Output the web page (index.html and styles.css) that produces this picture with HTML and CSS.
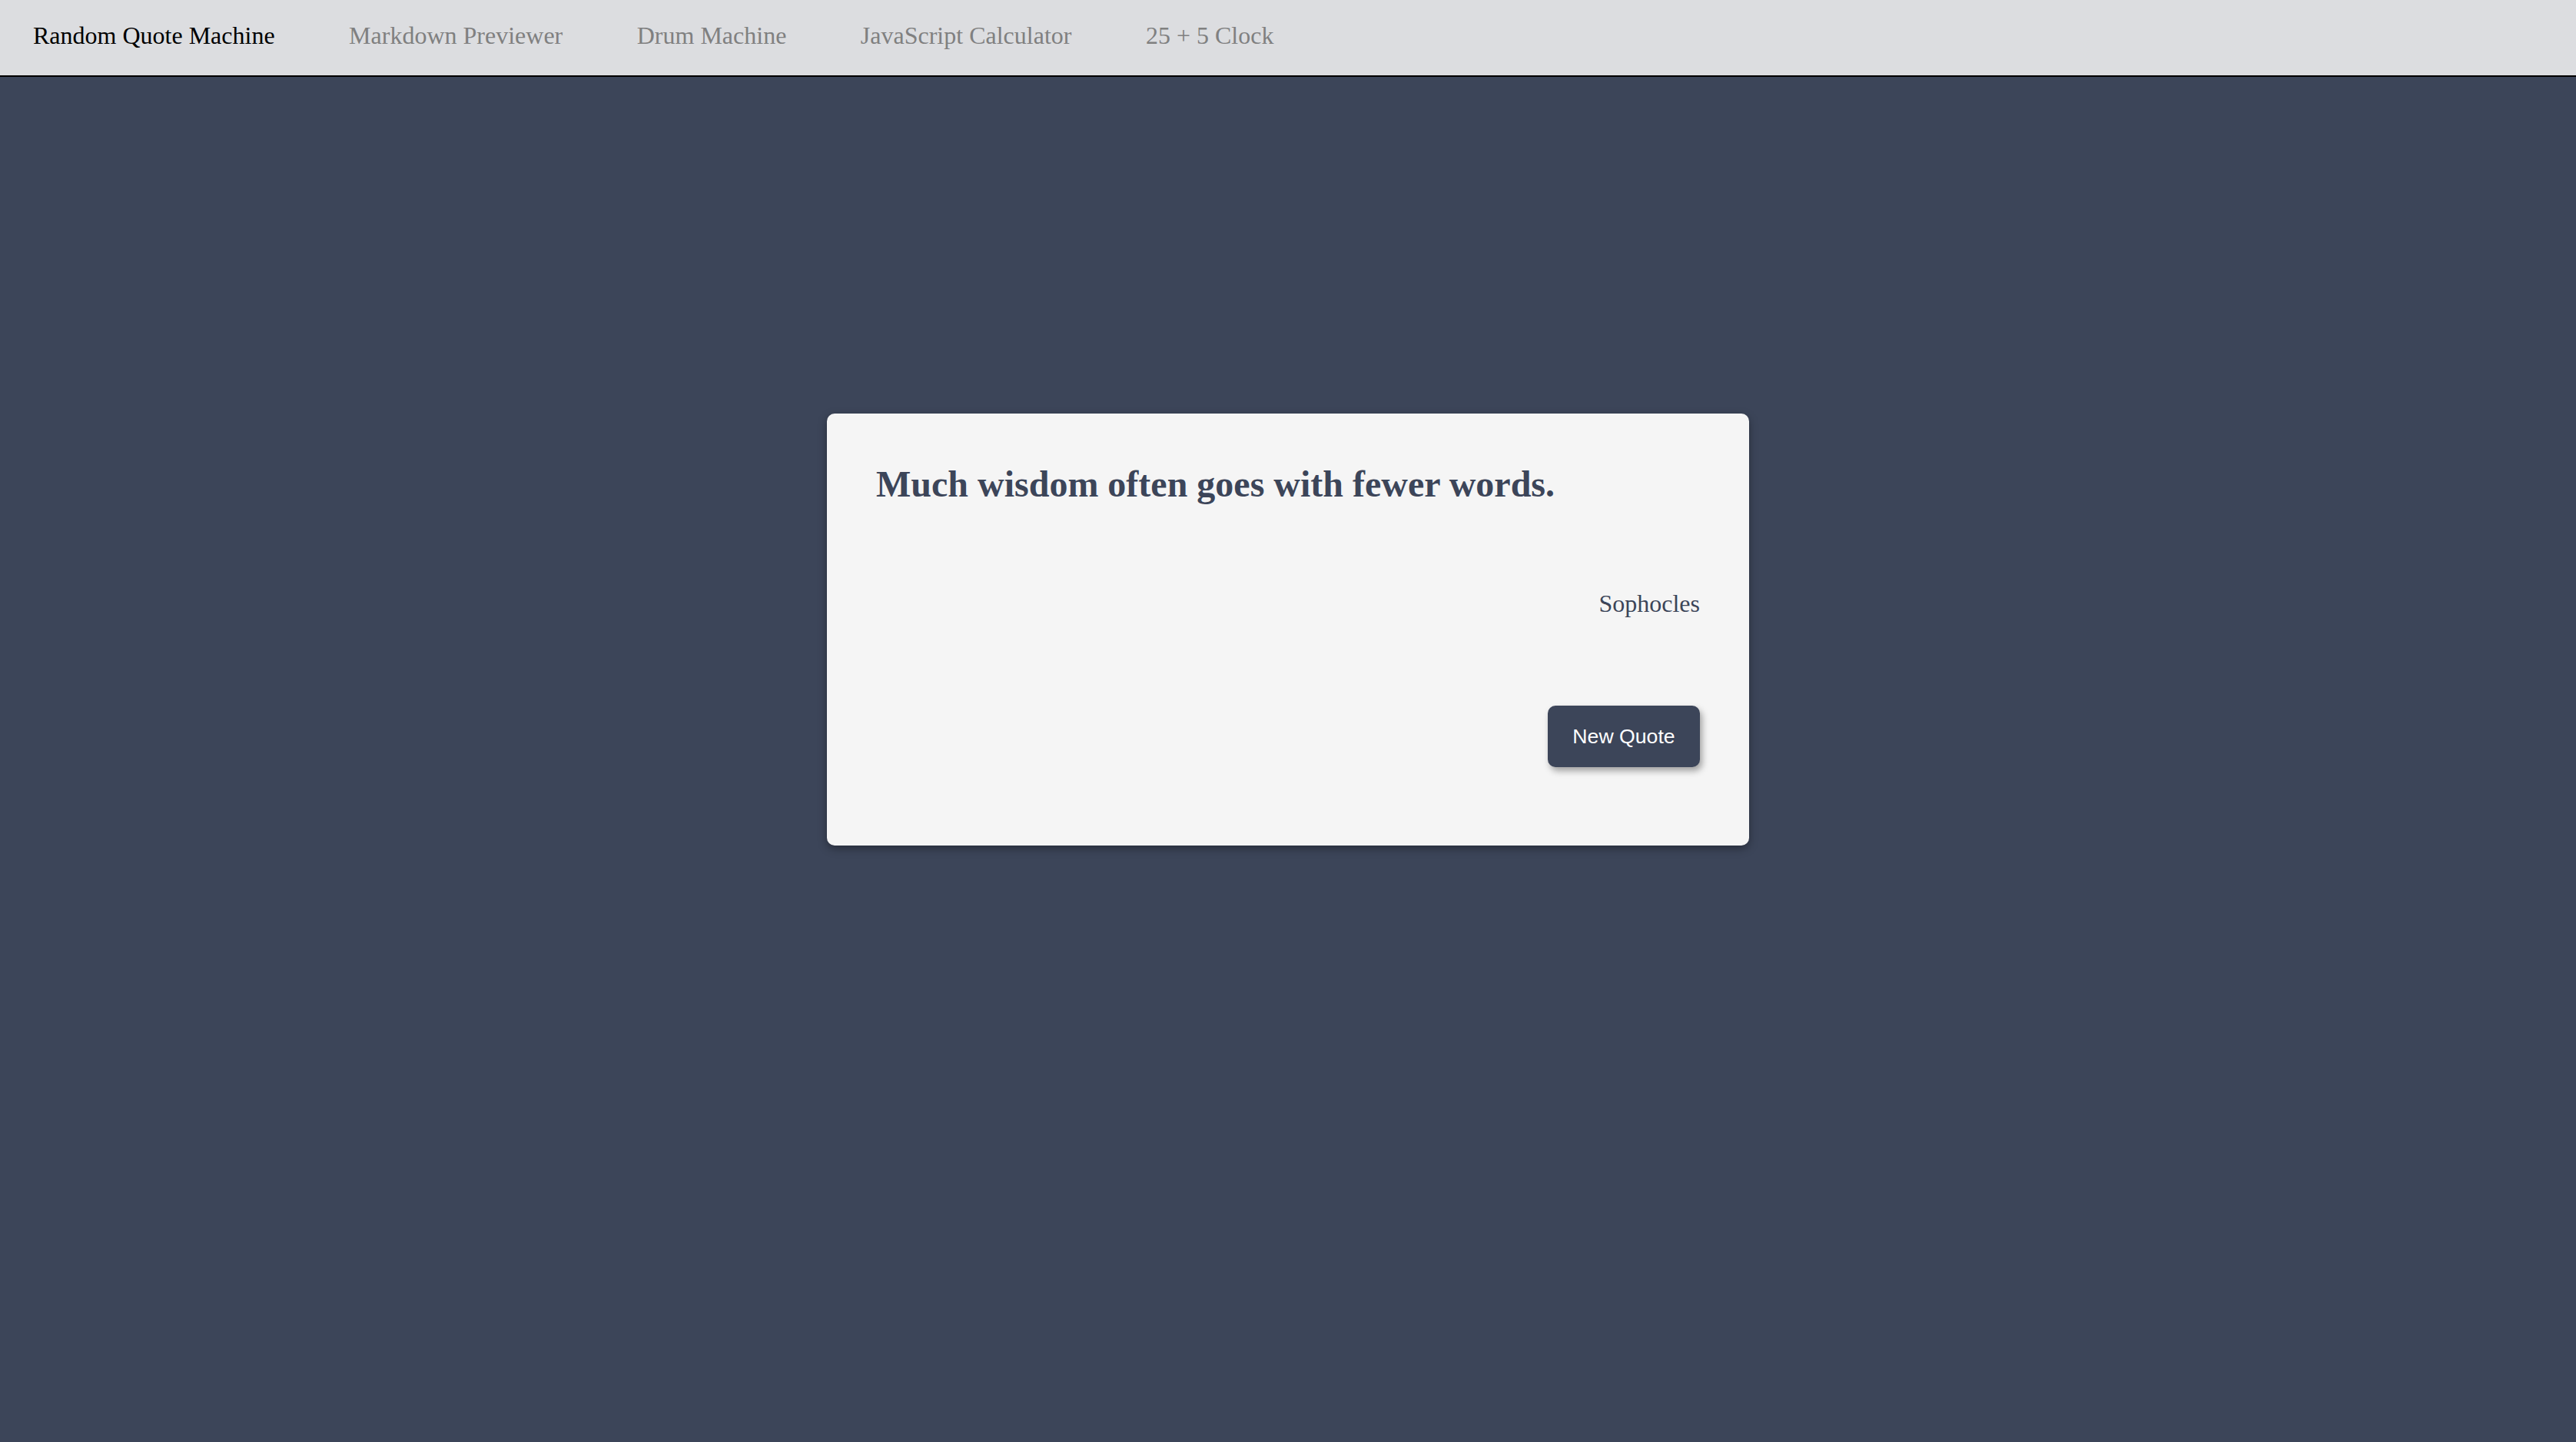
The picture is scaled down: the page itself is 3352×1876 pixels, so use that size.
FILE: index.html
```html
<!DOCTYPE html>
<html lang="en">
<head>
<meta charset="utf-8">
<title>Random Quote Machine</title>
<link rel="stylesheet" href="styles.css">
</head>
<body>
<nav class="nav">
  <a class="nav-link active" href="#">Random Quote Machine</a>
  <a class="nav-link" href="#">Markdown Previewer</a>
  <a class="nav-link" href="#">Drum Machine</a>
  <a class="nav-link" href="#">JavaScript Calculator</a>
  <a class="nav-link" href="#">25 + 5 Clock</a>
</nav>
<main class="main">
  <div class="quote-box" id="quote-box">
    <h1 class="quote-text" id="text">Much wisdom often goes with fewer words.</h1>
    <p class="quote-author" id="author">Sophocles</p>
    <div class="actions">
      <button class="new-quote" id="new-quote">New Quote</button>
    </div>
  </div>
</main>
</body>
</html>
```
FILE: styles.css
```css
html, body {
  margin: 0;
  padding: 0;
}
body {
  background: #3c4559;
  font-family: "Liberation Serif", "Times New Roman", serif;
  min-height: 1876px;
}
.nav {
  box-sizing: border-box;
  height: 100px;
  background: #dcdde0;
  border-bottom: 2px solid #000;
  display: flex;
  gap: 96.5px;
  padding: 28px 0 0 43px;
}
.nav-link {
  font-size: 32px;
  line-height: 37px;
  color: #808080;
  text-decoration: none;
}
.nav-link.active {
  color: #000;
}
.main {
  display: flex;
  justify-content: center;
  padding-top: 438px;
}
.quote-box {
  box-sizing: border-box;
  width: 1200px;
  height: 562px;
  background: #f5f5f5;
  border-radius: 10px;
  padding: 64px;
  box-shadow: 0 4px 12px rgba(0, 0, 0, 0.35);
  color: #3c4559;
}
.quote-text {
  margin: 0;
  font-size: 48px;
  line-height: 55px;
  font-weight: bold;
}
.quote-author {
  margin: 110px 0 0;
  text-align: right;
  font-size: 32px;
  line-height: 37px;
}
.actions {
  display: flex;
  justify-content: flex-end;
  margin-top: 114px;
}
.new-quote {
  box-sizing: border-box;
  height: 80px;
  width: 198px;
  border: none;
  border-radius: 10px;
  background: #3c4559;
  color: #fff;
  font-family: "Liberation Sans", Arial, sans-serif;
  font-size: 26.67px;
  line-height: 30px;
  padding: 0;
  box-shadow: 3px 5px 8px rgba(0, 0, 0, 0.35);
  cursor: pointer;
}
```
